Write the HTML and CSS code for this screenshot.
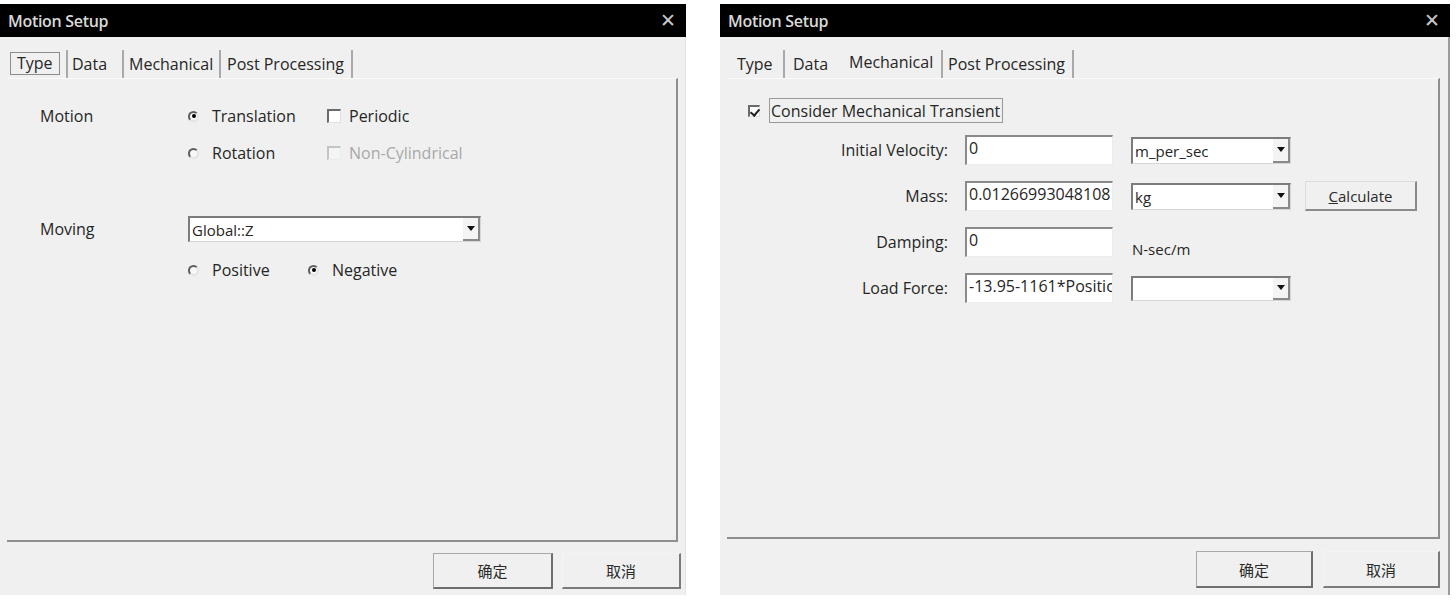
FILE: index.html
```html
<!DOCTYPE html>
<html>
<head>
<meta charset="utf-8">
<link rel="stylesheet" href="styles.css">
</head>
<body>
<div class="screen">
  <div class="dialog dialog-left">
    <div class="titlebar"><span class="title">Motion Setup</span><span class="close">✕</span></div>
    <div class="body">
      <div class="tabs">
        <div class="tab tl-type"><span class="focus">Type</span></div>
        <div class="tab tl-data">Data</div>
        <div class="tab tl-mech">Mechanical</div>
        <div class="tab tl-post">Post Processing</div>
      </div>
      <div class="panel panel-left">
        <div class="trow trow-1">
          <span class="tlabel">Motion</span>
          <label class="opt opt-w1"><i class="radio on"></i>Translation</label>
          <label class="opt"><i class="check"></i>Periodic</label>
        </div>
        <div class="trow trow-2">
          <span class="tlabel"></span>
          <label class="opt opt-w1"><i class="radio"></i>Rotation</label>
          <label class="opt disabled"><i class="check dis"></i>Non-Cylindrical</label>
        </div>
        <div class="trow trow-moving">
          <span class="tlabel">Moving</span>
          <div class="select select-moving"><span class="sel-text">Global::Z</span><span class="arrow"></span></div>
        </div>
        <div class="trow trow-dir">
          <span class="tlabel"></span>
          <label class="opt opt-w2"><i class="radio"></i>Positive</label>
          <label class="opt"><i class="radio on"></i>Negative</label>
        </div>
      </div>
      <div class="footer footer-left">
        <button class="btn btn-default">确定</button>
        <button class="btn">取消</button>
      </div>
    </div>
  </div>

  <div class="dialog dialog-right">
    <div class="titlebar"><span class="title">Motion Setup</span><span class="close">✕</span></div>
    <div class="body body-right">
      <div class="tabs">
        <div class="tab tr-type">Type</div>
        <div class="tab tr-data">Data</div>
        <div class="tab tr-mech">Mechanical</div>
        <div class="tab tr-post">Post Processing</div>
      </div>
      <div class="panel panel-right">
        <div class="consider">
          <i class="check on"></i><span class="focus-label">Consider Mechanical Transient</span>
        </div>
        <div class="form">
          <div class="frow">
            <span class="flabel">Initial Velocity:</span>
            <div class="input">0</div>
            <div class="select select-unit"><span class="sel-text">m_per_sec</span><span class="arrow"></span></div>
          </div>
          <div class="frow">
            <span class="flabel">Mass:</span>
            <div class="input">0.01266993048108</div>
            <div class="select select-unit"><span class="sel-text">kg</span><span class="arrow"></span></div>
            <button class="btn btn-calc"><u>C</u>alculate</button>
          </div>
          <div class="frow">
            <span class="flabel">Damping:</span>
            <div class="input">0</div>
            <span class="unit-text">N-sec/m</span>
          </div>
          <div class="frow">
            <span class="flabel">Load Force:</span>
            <div class="input">-13.95-1161*Position</div>
            <div class="select select-unit select-load"><span class="sel-text"></span><span class="arrow"></span></div>
          </div>
        </div>
      </div>
      <div class="footer footer-right">
        <button class="btn btn-default btn-r">确定</button>
        <button class="btn btn-r">取消</button>
      </div>
    </div>
  </div>
</div>
</body>
</html>
```

FILE: styles.css
```css
* { box-sizing: border-box; }

body {
  margin: 0;
  background: #ffffff;
  font-family: "Open Sans", "Noto Sans", "Noto Sans CJK SC", sans-serif;
  font-size: 16px;
  color: #262626;
}

.screen {
  display: flex;
  gap: 34px;
  padding-top: 4px;
  width: 1456px;
  height: 602px;
}

.dialog {
  display: flex;
  flex-direction: column;
  height: 591px;
}

.dialog-left { width: 686px; }
.dialog-right { width: 730px; }

.titlebar {
  height: 33px;
  background: #000;
  display: flex;
  align-items: center;
  justify-content: space-between;
  padding: 0 10px 0 8px;
}

.title {
  color: #d8d8d8;
  font-size: 16px;
  font-weight: 600;
  letter-spacing: -0.3px;
}

.close {
  color: #c8c8c8;
  font-family: "DejaVu Sans", sans-serif;
  font-size: 19px;
  line-height: 1;
}

.body {
  flex: 1;
  background: #f0f0f0;
  display: flex;
  flex-direction: column;
  border-right: 1px solid #e2e2e2;
}

.body-right { border-right: 2px solid #9c9c9c; }

/* tabs */
.tabs {
  display: flex;
  height: 28px;
  margin: 13px 0 0 8px;
}

.tab {
  display: flex;
  align-items: center;
  border-right: 2px solid #a9a9a9;
  white-space: nowrap;
}

.tl-type { width: 60px; padding-left: 2px; }
.tl-type .focus {
  display: flex;
  align-items: center;
  height: 23px;
  padding: 0 6px;
  border: 1px solid #8c8c8c;
  margin-top: -2px;
}
.tl-data { width: 56px; padding-left: 4px; }
.tl-mech { width: 97px; padding-left: 5px; }
.tl-post { width: 132px; padding-left: 6px; }

.tr-type { width: 57px; padding-left: 9px; }
.tr-data { width: 58px; padding-left: 8px; border-right-color: transparent; }
.tr-mech { width: 100px; padding-left: 6px; padding-bottom: 4px; }
.tr-post { width: 131px; padding-left: 5px; }

/* panel */
.panel {
  margin-left: 7px;
  border-top: 1px solid #fafafa;
  border-right: 2px solid #8e8e8e;
  border-bottom: 2px solid #8e8e8e;
}

.panel-left {
  width: 671px;
  height: 464px;
  padding: 25px 0 0 33px;
}

.panel-right {
  width: 713px;
  height: 461px;
  padding: 19px 0 0 21px;
}

/* type tab content */
.trow {
  display: flex;
  align-items: center;
  height: 24px;
}

.trow-2 { margin-top: 13px; }
.trow-moving { margin-top: 51px; height: 26px; }
.trow-dir { margin-top: 16px; }

.tlabel { width: 148px; flex: none; }

.opt {
  display: flex;
  align-items: center;
  white-space: nowrap;
}

.opt-w1 { width: 139px; }
.opt-w2 { width: 120px; }

.disabled { color: #a8a8a8; }

.radio {
  width: 11px;
  height: 11px;
  border-radius: 50%;
  border: 2px solid;
  border-color: #5e5e5e #e4e4e4 #e4e4e4 #5e5e5e;
  margin-right: 13px;
  display: flex;
  align-items: center;
  justify-content: center;
  flex: none;
  background: #f7f7f7;
}

.radio.on::after {
  content: "";
  width: 4px;
  height: 4px;
  border-radius: 50%;
  background: #000;
}

.check {
  width: 14px;
  height: 14px;
  background: #fff;
  border: 1px solid;
  border-color: #6a6a6a #e0e0e0 #e0e0e0 #6a6a6a;
  border-width: 2px 1px 1px 2px;
  margin-right: 8px;
  flex: none;
  position: relative;
}

.check.dis {
  border-color: #c4c4c4 #ececec #ececec #c4c4c4;
  background: #f4f4f4;
}

.check.on::after {
  content: "";
  position: absolute;
  left: 2px;
  top: 0px;
  width: 4px;
  height: 7px;
  border: solid #222;
  border-width: 0 2px 2px 0;
  transform: rotate(40deg);
}

/* select */
.select {
  display: flex;
  align-items: center;
  background: #fff;
  border: 1px solid;
  border-color: #7c7c7c #d6d6d6 #d6d6d6 #7c7c7c;
  border-width: 2px 1px 1px 2px;
  padding-left: 2px;
  overflow: hidden;
}

.sel-text {
  flex: 1;
  white-space: nowrap;
  font-size: 15px;
}

.arrow {
  width: 17px;
  height: 100%;
  display: flex;
  align-items: center;
  justify-content: center;
  border-right: 2px solid #8a8a8a;
  border-bottom: 2px solid #8a8a8a;
  background: #f4f4f4;
}

.arrow::after {
  content: "";
  border-left: 4px solid transparent;
  border-right: 4px solid transparent;
  border-top: 5px solid #111;
}

.select-moving {
  width: 293px;
  height: 26px;
}

/* mechanical tab */
.consider {
  display: flex;
  align-items: center;
  height: 25px;
}

.consider .check {
  width: 12px;
  height: 12px;
  margin-right: 9px;
}

.focus-label {
  display: flex;
  align-items: center;
  height: 25px;
  padding: 0 2px 0 1px;
  border: 1px solid #9a9a9a;
  white-space: nowrap;
  width: 234px;
  overflow: hidden;
}

.form {
  margin-top: 12px;
  display: flex;
  flex-direction: column;
  gap: 16px;
}

.frow {
  display: flex;
  align-items: center;
  height: 30px;
}

.flabel {
  width: 200px;
  text-align: right;
  margin-right: 17px;
  flex: none;
  font-size: 16px;
}

.input {
  width: 148px;
  height: 30px;
  background: #fff;
  border: solid;
  border-color: #8a8a8a #ececec #ececec #8a8a8a;
  border-width: 2px 1px 1px 2px;
  padding: 1px 0 0 2px;
  white-space: nowrap;
  overflow: hidden;
  flex: none;
  font-size: 16px;
  line-height: 21px;
  align-self: flex-start;
}

.select-unit {
  width: 160px;
  height: 27px;
  margin-left: 18px;
  flex: none;
}

.select-load { height: 25px; }

.unit-text {
  margin-left: 19px;
  margin-top: 14px;
  font-size: 15px;
}

.btn {
  font-family: "Noto Sans CJK SC", "Open Sans", sans-serif;
  font-size: 15px;
  color: #2a2a2a;
  background: #f0f0f0;
  border: 1px solid;
  border-color: #f4f4f4 #7a7a7a #7a7a7a #f4f4f4;
  border-width: 1px 2px 2px 1px;
  width: 119px;
  height: 36px;
  padding: 0;
}

.btn-default {
  border-color: #a8a8a8 #6e6e6e #6e6e6e #a8a8a8;
  width: 120px;
}

.btn-r { width: 117px; height: 37px; }

.btn-calc {
  font-family: "Open Sans", sans-serif;
  margin-left: 14px;
  width: 112px;
  height: 30px;
  border-color: #dcdcdc #8a8a8a #8a8a8a #dcdcdc;
}

.footer {
  display: flex;
  justify-content: flex-end;
  gap: 9px;
}

.footer-left { margin-top: 11px; padding-right: 4px; }
.footer-right { margin-top: 12px; padding-right: 8px; gap: 10px; }
```
